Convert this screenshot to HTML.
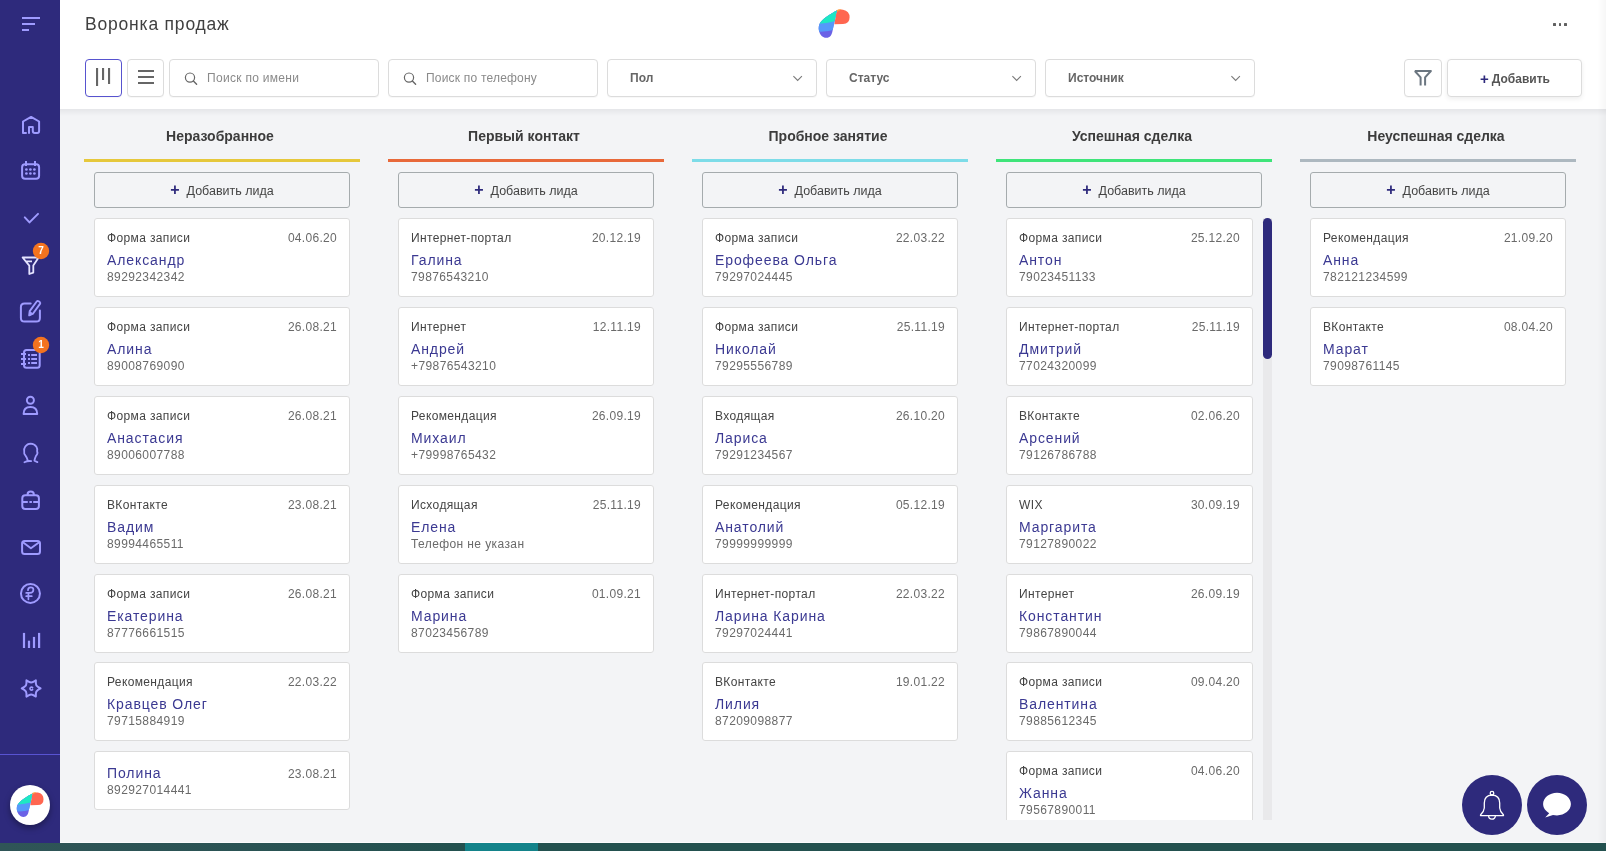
<!DOCTYPE html>
<html lang="ru">
<head>
<meta charset="utf-8">
<title>Воронка продаж</title>
<style>
*{box-sizing:border-box;margin:0;padding:0}
html,body{width:1606px;height:851px;overflow:hidden}
body{position:relative;background:#f3f4f6;font-family:"Liberation Sans",sans-serif;color:#444}
.abs{position:absolute}
#sidebar{position:absolute;left:0;top:0;width:60px;height:843px;background:#2e2a7c}
#sb{position:absolute;left:0;top:0}
#sblogo{position:absolute;left:9.8px;top:784.6px;width:40.4px;height:40.4px;border-radius:50%;background:#fff;box-shadow:0 3px 6px rgba(0,0,0,.35)}
#sblogo svg{position:absolute;left:6.2px;top:7.4px}
#header{position:absolute;left:60px;top:0;width:1546px;height:109px;background:#fff}
#hshadow{position:absolute;left:60px;top:109px;width:1546px;height:7px;background:linear-gradient(#e5e6e9,rgba(243,244,246,0))}
#title{position:absolute;left:25px;top:13px;font-size:17.5px;letter-spacing:.8px;color:#404040;line-height:22px;white-space:nowrap}
#dots{position:absolute;left:1493px;top:23px;width:20px;height:3px}
#dots i{position:absolute;top:0;width:2.8px;height:2.8px;background:#606060;border-radius:.5px}
#dots i:nth-child(1){left:0}#dots i:nth-child(2){left:5.6px}#dots i:nth-child(3){left:11.2px}
.tb{position:absolute;top:59px;height:38px;background:#fff;border:1px solid #dcdcdc;border-radius:4px;box-shadow:0 1px 1px rgba(0,0,0,.03)}
.tb .ph{position:absolute;top:11px;font-size:12px;letter-spacing:.3px;line-height:14px;color:#8a8a8a;white-space:nowrap}
.tb .sl{position:absolute;left:22px;top:11px;font-size:12px;font-weight:bold;line-height:14px;color:#666;white-space:nowrap}
.addtxt{position:absolute;left:32px;top:11px;font-size:12px;font-weight:bold;line-height:14px;color:#555;white-space:nowrap}
.addtxt b{color:#2e2a7c;font-size:15px;margin-right:3px;position:relative;top:1px}
#bottombar{position:absolute;left:0;top:843px;width:1606px;height:8px;background:linear-gradient(90deg,#2f5557 0,#2a5354 250px,#23514f 450px,#23514f 100%)}
#wline{position:absolute;left:60px;top:842px;width:1546px;height:1px;background:#fbfbfc}
#redge{position:absolute;left:1598px;top:0;width:8px;height:843px;background:linear-gradient(90deg,rgba(0,0,0,0),rgba(0,0,0,.035))}
#bottombar i{position:absolute;left:465px;top:0;width:73px;height:8px;background:#13838a}
.col{position:absolute;top:109px;width:276px;height:734px}
.colh{position:absolute;left:-2px;top:19px;width:276px;text-align:center;font-size:14px;font-weight:bold;color:#3c3c3c;line-height:17px;white-space:nowrap}
.coll{position:absolute;left:0;top:50px;width:276px;height:3px}
.addb{position:absolute;left:10px;top:63px;width:256px;height:36px;border:1px solid #a5abad;border-radius:3px;text-align:center;font-size:12.5px;line-height:34px;color:#444;white-space:nowrap}
.addb b{color:#2e2a7c;font-size:16px;font-weight:bold;margin-right:7px;position:relative;top:0px}
.card{position:absolute;left:10px;width:256px;height:79px;background:#fff;border:1px solid #dcdcdc;border-radius:3px}
.card .src{position:absolute;left:12px;top:12px;font-size:12px;letter-spacing:.37px;color:#444;line-height:14px;white-space:nowrap}
.card .dt{position:absolute;right:12px;top:12px;font-size:12px;letter-spacing:.3px;color:#6a6a6a;line-height:14px;white-space:nowrap}
.card .nm{position:absolute;left:12px;top:32.5px;font-size:14px;letter-spacing:.9px;color:#3b3992;line-height:17px;white-space:nowrap}
.card .ph{position:absolute;left:12px;top:50.5px;font-size:12px;letter-spacing:.4px;color:#6a6a6a;line-height:14px;white-space:nowrap}
.scroll{position:absolute;overflow:hidden}
.scroll .card{left:0}
.track{position:absolute;left:257px;top:0;width:9px;height:602px;background:#e9e9eb}
.thumb{position:absolute;left:257px;top:0;width:9px;height:141px;border-radius:5px;background:#2e2a7c}
.fab{position:absolute;top:775px;width:60px;height:60px;border-radius:50%;background:#2e2a7c}
.fab svg{position:absolute;left:0;top:0}
.tb > svg{left:-1px !important;top:-1px !important}
#header,.col,#sidebar,.fab{will-change:transform}

</style>
</head>
<body>
<svg width="0" height="0" style="position:absolute"><symbol id="logo" viewBox="0 0 32 30" overflow="visible">
<clipPath id="leafclip"><path d="M18.8 1.6 C14 4 4 10 1.5 15 C-1 21 2.5 28.8 8.5 28.8 C12 28.8 13.8 26 14.5 22 Z"/></clipPath>
<path fill="#ff6650" d="M18.8 1.3 Q21.5 0.3 25 0.7 Q31.6 2 31.6 8.3 Q31.6 15 25 15 L16.3 15.3 Z"/>
<path fill="#ffa33a" d="M18.4 1.2 Q20.5 0.1 23.5 0.3 L19 3 Z"/>
<g clip-path="url(#leafclip)">
<rect x="-5" y="-5" width="40" height="40" fill="#6b62e6"/>
<path fill="#5599fa" d="M-5 -5 H25 V17.5 Q12 23.6 -5 22.8 Z"/>
<path fill="#1ee8c3" d="M-5 -5 H25 V9.8 Q10 14.9 -5 14.8 Z"/>
</g>
</symbol></svg>
<div id="sidebar"><svg id="sb" width="60" height="843" viewBox="0 0 60 843"><g fill="none" stroke="#9f9bff" stroke-width="2" stroke-linecap="round" stroke-linejoin="round"><path stroke-linecap="butt" d="M22 18H40M22 24H35M22 30H29"/><path d="M26 132.9H23V121.5L31.1 116.9L39.1 121.5V131Q39.1 132.9 37.2 132.9H34.8Q32.8 132.9 32.8 130.9V127H29V132.9"/><rect x="22.1" y="164.2" width="17" height="14.6" rx="3"/><path stroke-linecap="butt" d="M26 161V166M35 161V166"/><path d="M24.8 217.4L29.5 222.4L38 213.9"/><path d="M30.7 303.5H24.5Q20.9 303.5 20.9 307.1V318Q20.9 321.6 24.5 321.6H36.3Q39.9 321.6 39.9 318V310.6"/><path stroke-width="1.9" d="M29.3 315.3L29.7 311.1L36.7 301.5Q37.5 300.5 38.6 301.2L39.8 302.1Q40.7 302.9 40 303.9L32.9 313.7Z"/><path fill="#9f9bff" stroke="none" d="M28.6 316.3L29.1 310.6L33.8 314.1Z"/><rect x="24" y="349.9" width="15.7" height="17.9" rx="2.5"/><path stroke-linecap="butt" d="M21 354H26M21 359H26M21 364H26M28 355H30M31.2 355H37M28 359H30M31.2 359H37M28 363H30M31.2 363H37"/><circle cx="30.4" cy="400.3" r="3.5"/><path d="M23.6 413.9Q23.6 407 30.4 407Q37.2 407 37.2 413.9Z"/><path stroke-width="1.8" d="M24.4 462.2Q27.5 460.7 31.2 461.1M28 460.9Q27 457.4 25.5 455.6Q23.7 453.6 24.2 451.2Q23.8 448.8 25.3 446.6Q27.3 443.6 30.6 443.6Q34.4 443.7 36.4 446.8Q37.6 448.8 37.1 451.2Q38.3 453.4 36 455.8Q34.9 458 34.4 460.7L37.4 462.1"/><rect x="22.3" y="495.2" width="16.6" height="13.7" rx="3"/><path d="M27.6 495V494.2Q27.6 491.6 30.7 491.6Q33.8 491.6 33.8 494.2V495"/><path stroke-linecap="butt" d="M22.5 501.9H27.8M29.4 501.9H31.9M33.2 501.9H38.8"/><rect x="22.1" y="541" width="17.9" height="12.9" rx="2.5"/><path d="M22.9 542.3L30.9 548.2L39.2 542.3"/><circle cx="30.45" cy="593.45" r="9.5"/><path stroke-width="1.7" d="M28 590.2Q28 587.4 30.7 587.4Q33.4 587.4 33.4 589.7Q33.4 592.6 30 592.9H26.2M28.4 593V599.3M26.2 596.2H31.8"/><path d="M40.55 688.45L37.95 689.94Q35.83 691.15 35.84 693.60L35.85 696.59L33.27 695.08Q31.15 693.85 29.04 695.08L26.45 696.59L26.46 693.60Q26.47 691.15 24.35 689.94L21.75 688.45L24.35 686.97Q26.47 685.75 26.46 683.30L26.45 680.31L29.03 681.82Q31.15 683.05 33.27 681.82L35.85 680.31L35.84 683.30Q35.83 685.75 37.95 686.97L40.55 688.45Z"/><path stroke-width="1.6" d="M32.6 687.6A1.5 1.5 0 1 0 32.6 689.6"/></g><g fill="#9f9bff"><rect x="22.9" y="632.9" width="2.2" height="15.1"/><rect x="27.9" y="640.7" width="2.2" height="7.3"/><rect x="32.9" y="636.9" width="2.2" height="11.1"/><rect x="38" y="632.9" width="2.2" height="15.1"/></g><g fill="#9f9bff"><circle cx="26.4" cy="169.5" r="1.35"/><circle cx="30.4" cy="169.5" r="1.35"/><circle cx="34.4" cy="169.5" r="1.35"/><circle cx="26.4" cy="173.5" r="1.35"/><circle cx="30.4" cy="173.5" r="1.35"/><circle cx="34.4" cy="173.5" r="1.35"/></g><path fill="none" stroke="#e4e3ff" stroke-width="1.8" stroke-linejoin="round" d="M22.6 257.5H38.6L33.3 265.6V272.6L29.3 274V265.6ZM25.2 261.3H32"/><circle cx="41" cy="251" r="8.2" fill="#f4731f"/><text x="41" y="254.2" text-anchor="middle" font-family="Liberation Sans" font-weight="bold" font-size="10" fill="#fff">7</text><circle cx="41" cy="345" r="8.2" fill="#f4731f"/><text x="41" y="348.2" text-anchor="middle" font-family="Liberation Sans" font-weight="bold" font-size="10" fill="#fff">1</text><rect x="0" y="754" width="60" height="1" fill="#5853d2"/></svg><div id="sblogo"><svg width="28" height="26" viewBox="0 0 32 30"><use href="#logo"/></svg></div></div>
<div id="header"><div id="title">Воронка продаж</div><svg class="abs" style="left:758px;top:9px" width="32" height="30" viewBox="0 0 32 30"><use href="#logo"/></svg><div id="dots"><i></i><i></i><i></i></div><div class="tb" style="left:25px;width:37px;border-color:#5753cf"><svg class="abs" style="left:0;top:0" width="37" height="38" viewBox="85 59 37 38"><g fill="#666"><rect x="96" y="68" width="2.1" height="18"/><rect x="102" y="68" width="2.1" height="12"/><rect x="108" y="68" width="2.1" height="16"/></g></svg></div><div class="tb" style="left:67px;width:37px"><svg class="abs" style="left:0;top:0" width="37" height="38" viewBox="127 59 37 38"><g fill="#666"><rect x="138" y="70" width="16" height="2"/><rect x="138" y="76" width="16" height="2"/><rect x="138" y="82" width="16" height="2"/></g></svg></div><div class="tb" style="left:109px;width:210px"><svg class="abs" style="left:0;top:0" width="40" height="38" viewBox="169 59 40 38"><circle cx="190" cy="77.6" r="4.6" fill="none" stroke="#666" stroke-width="1.2"/><path d="M193.4 81L196.6 84.2" stroke="#666" stroke-width="1.4" stroke-linecap="round"/></svg><div class="ph" style="left:37px">Поиск по имени</div></div><div class="tb" style="left:328px;width:210px"><svg class="abs" style="left:0;top:0" width="40" height="38" viewBox="388 59 40 38"><circle cx="409" cy="77.6" r="4.6" fill="none" stroke="#666" stroke-width="1.2"/><path d="M412.4 81L415.6 84.2" stroke="#666" stroke-width="1.4" stroke-linecap="round"/></svg><div class="ph" style="left:37px;letter-spacing:.2px">Поиск по телефону</div></div><div class="tb" style="left:547px;width:210px"><div class="sl">Пол</div><svg class="abs" width="210" height="38" viewBox="607 59 210 38"><path d="M793.4 76.2L797.65 80.4L801.9 76.2" fill="none" stroke="#7a7a7a" stroke-width="1.1"/></svg></div><div class="tb" style="left:766px;width:210px"><div class="sl">Статус</div><svg class="abs" width="210" height="38" viewBox="826 59 210 38"><path d="M1012.4 76.2L1016.65 80.4L1020.9 76.2" fill="none" stroke="#7a7a7a" stroke-width="1.1"/></svg></div><div class="tb" style="left:985px;width:210px"><div class="sl">Источник</div><svg class="abs" width="210" height="38" viewBox="1045 59 210 38"><path d="M1231.4 76.2L1235.65 80.4L1239.9 76.2" fill="none" stroke="#7a7a7a" stroke-width="1.1"/></svg></div><div class="tb" style="left:1344px;width:38px"><svg class="abs" style="left:0;top:0" width="37" height="38" viewBox="1404 59 37 38"><path d="M1414.8 71H1430.9L1425.1 77.4V85.4M1420.6 85.4V77.4L1414.8 71" fill="none" stroke="#6b7680" stroke-width="2" stroke-linejoin="round"/></svg></div><div class="tb" style="left:1387px;width:135px;box-shadow:0 2px 5px rgba(0,0,0,.07)"><div class="addtxt"><b>+</b>Добавить</div></div></div>
<div id="hshadow"></div>
<div class="col" style="left:84px"><div class="colh">Неразобранное</div><div class="coll" style="background:#e6c83c"></div><div class="addb"><b>+</b>Добавить лида</div><div class="card" style="top:109.0px;width:256px"><div class="src">Форма записи</div><div class="dt">04.06.20</div><div class="nm">Александр</div><div class="ph">89292342342</div></div><div class="card" style="top:198.0px;width:256px"><div class="src">Форма записи</div><div class="dt">26.08.21</div><div class="nm">Алина</div><div class="ph">89008769090</div></div><div class="card" style="top:287.0px;width:256px"><div class="src">Форма записи</div><div class="dt">26.08.21</div><div class="nm">Анастасия</div><div class="ph">89006007788</div></div><div class="card" style="top:376.0px;width:256px"><div class="src">ВКонтакте</div><div class="dt">23.08.21</div><div class="nm">Вадим</div><div class="ph">89994465511</div></div><div class="card" style="top:465.0px;width:256px"><div class="src">Форма записи</div><div class="dt">26.08.21</div><div class="nm">Екатерина</div><div class="ph">87776661515</div></div><div class="card" style="top:553.0px;width:256px"><div class="src">Рекомендация</div><div class="dt">22.03.22</div><div class="nm">Кравцев Олег</div><div class="ph">79715884919</div></div><div class="card" style="top:642.0px;height:59px;width:256px"><div class="nm" style="top:12.9px">Полина</div><div class="dt" style="top:14.6px">23.08.21</div><div class="ph" style="top:31.1px">892927014441</div></div></div><div class="col" style="left:388px"><div class="colh">Первый контакт</div><div class="coll" style="background:#e8693a"></div><div class="addb"><b>+</b>Добавить лида</div><div class="card" style="top:109.0px;width:256px"><div class="src">Интернет-портал</div><div class="dt">20.12.19</div><div class="nm">Галина</div><div class="ph">79876543210</div></div><div class="card" style="top:198.0px;width:256px"><div class="src">Интернет</div><div class="dt">12.11.19</div><div class="nm">Андрей</div><div class="ph">+79876543210</div></div><div class="card" style="top:287.0px;width:256px"><div class="src">Рекомендация</div><div class="dt">26.09.19</div><div class="nm">Михаил</div><div class="ph">+79998765432</div></div><div class="card" style="top:376.0px;width:256px"><div class="src">Исходящая</div><div class="dt">25.11.19</div><div class="nm">Елена</div><div class="ph">Телефон не указан</div></div><div class="card" style="top:465.0px;width:256px"><div class="src">Форма записи</div><div class="dt">01.09.21</div><div class="nm">Марина</div><div class="ph">87023456789</div></div></div><div class="col" style="left:692px"><div class="colh">Пробное занятие</div><div class="coll" style="background:#7ddce8"></div><div class="addb"><b>+</b>Добавить лида</div><div class="card" style="top:109.0px;width:256px"><div class="src">Форма записи</div><div class="dt">22.03.22</div><div class="nm">Ерофеева Ольга</div><div class="ph">79297024445</div></div><div class="card" style="top:198.0px;width:256px"><div class="src">Форма записи</div><div class="dt">25.11.19</div><div class="nm">Николай</div><div class="ph">79295556789</div></div><div class="card" style="top:287.0px;width:256px"><div class="src">Входящая</div><div class="dt">26.10.20</div><div class="nm">Лариса</div><div class="ph">79291234567</div></div><div class="card" style="top:376.0px;width:256px"><div class="src">Рекомендация</div><div class="dt">05.12.19</div><div class="nm">Анатолий</div><div class="ph">79999999999</div></div><div class="card" style="top:465.0px;width:256px"><div class="src">Интернет-портал</div><div class="dt">22.03.22</div><div class="nm">Ларина Карина</div><div class="ph">79297024441</div></div><div class="card" style="top:553.0px;width:256px"><div class="src">ВКонтакте</div><div class="dt">19.01.22</div><div class="nm">Лилия</div><div class="ph">87209098877</div></div></div><div class="col" style="left:996px"><div class="colh">Успешная сделка</div><div class="coll" style="background:#3fe47a"></div><div class="addb"><b>+</b>Добавить лида</div><div class="scroll" style="left:10px;top:109px;width:266px;height:602px"><div class="card" style="top:0.0px;width:247px"><div class="src">Форма записи</div><div class="dt">25.12.20</div><div class="nm">Антон</div><div class="ph">79023451133</div></div><div class="card" style="top:89.0px;width:247px"><div class="src">Интернет-портал</div><div class="dt">25.11.19</div><div class="nm">Дмитрий</div><div class="ph">77024320099</div></div><div class="card" style="top:178.0px;width:247px"><div class="src">ВКонтакте</div><div class="dt">02.06.20</div><div class="nm">Арсений</div><div class="ph">79126786788</div></div><div class="card" style="top:267.0px;width:247px"><div class="src">WIX</div><div class="dt">30.09.19</div><div class="nm">Маргарита</div><div class="ph">79127890022</div></div><div class="card" style="top:356.0px;width:247px"><div class="src">Интернет</div><div class="dt">26.09.19</div><div class="nm">Константин</div><div class="ph">79867890044</div></div><div class="card" style="top:444.0px;width:247px"><div class="src">Форма записи</div><div class="dt">09.04.20</div><div class="nm">Валентина</div><div class="ph">79885612345</div></div><div class="card" style="top:533.0px;width:247px"><div class="src">Форма записи</div><div class="dt">04.06.20</div><div class="nm">Жанна</div><div class="ph">79567890011</div></div><div class="track"></div><div class="thumb"></div></div></div><div class="col" style="left:1300px"><div class="colh">Неуспешная сделка</div><div class="coll" style="background:#adb8c0"></div><div class="addb"><b>+</b>Добавить лида</div><div class="card" style="top:109.0px;width:256px"><div class="src">Рекомендация</div><div class="dt">21.09.20</div><div class="nm">Анна</div><div class="ph">782121234599</div></div><div class="card" style="top:198.0px;width:256px"><div class="src">ВКонтакте</div><div class="dt">08.04.20</div><div class="nm">Марат</div><div class="ph">79098761145</div></div></div>
<div class="fab" style="left:1462px"><svg width="60" height="60" viewBox="1462 775 60 60"><g fill="none" stroke="#fff" stroke-width="1.3" stroke-linejoin="round"><circle cx="1492" cy="793.2" r="1.8"/><path d="M1492 795Q1484.3 795.4 1484.3 803V808Q1484 811.5 1480.6 814.8Q1480.2 815.6 1481 815.6H1503Q1503.8 815.6 1503.4 814.8Q1500 811.5 1499.7 808V803Q1499.7 795.4 1492 795Z"/><path d="M1488.6 815.8A3.4 3.4 0 0 0 1495.4 815.8"/></g></svg></div><div class="fab" style="left:1527px"><svg width="60" height="60" viewBox="1527 775 60 60"><path fill="#fff" d="M1557 792.7C1564.7 792.7 1570.9 797.8 1570.9 804.1C1570.9 810.3 1564.7 815.4 1557 815.4C1555.6 815.4 1554.3 815.2 1553 814.9L1545.2 817.6L1549.2 813.2C1545.5 811.1 1543.1 807.8 1543.1 804.1C1543.1 797.8 1549.3 792.7 1557 792.7Z"/></svg></div>
<div id="wline"></div><div id="redge"></div><div id="bottombar"><i></i></div>
</body>
</html>
